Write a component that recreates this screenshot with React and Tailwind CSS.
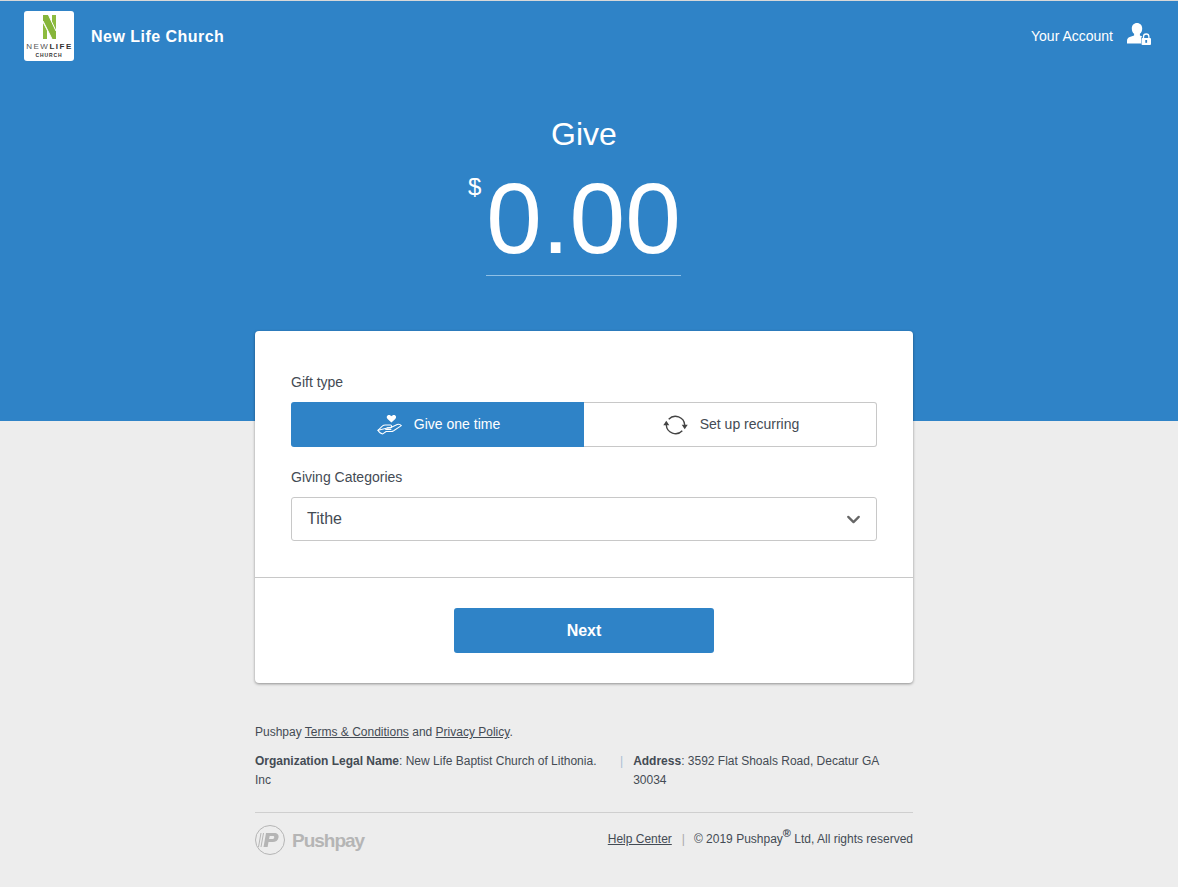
import { ChevronDown } from 'lucide-react'

const sans = { fontFamily: '"Liberation Sans", Arial, sans-serif' }

function ChurchLogo() {
  return (
    <div className="w-[50px] h-[50px] bg-white rounded-[3px] flex flex-col items-center pt-[4px] shrink-0">
      <svg width="13" height="24" viewBox="0 0 13 24">
        <path d="M0 8l4 7.500V24H0z" fill="#8dbb3f" />
        <path d="M9 0h4v16L9 8.500z" fill="#8dbb3f" />
        <path d="M0 0h5.500L13 16v8H9L0 6z" fill="#86b53a" />
        <path d="M0 6l9 18" stroke="#ffffff" strokeWidth="1" />
        <path d="M5.500 0L13 16" stroke="#ffffff" strokeWidth="1" />
      </svg>
      <div className="text-[8px] leading-[8px] mt-[4px] tracking-[1.5px] text-[#555] whitespace-nowrap pl-[1px]">
        NEW<span className="font-bold text-[#333]">LIFE</span>
      </div>
      <div className="text-[5px] leading-[5px] mt-[2px] font-bold tracking-[0.9px] text-[#333]">CHURCH</div>
    </div>
  )
}

function AccountIcon() {
  return (
    <svg width="24" height="22" viewBox="0 0 24 22" fill="white">
      <path d="M10 0c3.100 0 5.200 2.300 5.200 5.400 0 2.300-.9 4.300-2.300 5.400v1.700c.9.4 1.600.7 2.300 1-.8.600-1.200 1.500-1.200 2.600V20.500H0v-2.500c0-2.200 1-3.300 2.800-4 1.300-.5 2.900-1 4.300-1.500v-1.700C5.700 9.700 4.800 7.700 4.800 5.400 4.800 2.300 6.900 0 10 0z" />
      <path d="M15.500 15h7.500a1 1 0 0 1 1 1v5a1 1 0 0 1-1 1h-7.500a1 1 0 0 1-1-1v-5a1 1 0 0 1 1-1z" />
      <path d="M16.500 15v-1.300a2.700 2.700 0 0 1 5.400 0V15" fill="none" stroke="white" strokeWidth="1.300" />
      <rect x="18.300" y="17" width="1.800" height="2.800" fill="#2f83c7" />
    </svg>
  )
}

function HandHeartIcon() {
  return (
    <svg width="25" height="21" viewBox="0 0 26 21" fill="none" stroke="white" strokeWidth="1.100" strokeLinecap="round" strokeLinejoin="round">
      <path d="M15 8.500l-4-3.800C9.300 2.900 10.400.5 12.400.5c1.200 0 2 .6 2.600 1.500.6-.9 1.400-1.500 2.600-1.500 2 0 3.100 2.400 1.400 4.200z" fill="white" stroke="none" />
      <path d="M1 16.500l4.500-4.200c1-1 2-1.300 3.300-1.300h5.200c1.600 0 1.600 3 0 3h-3.500" />
      <path d="M15.500 13l5.500-2.500c1.800-.8 3.400.1 4.300 1.200l-8 5.300c-.8.500-1.600.8-2.600.8H9.500L6 20.300c-2-.2-4-1.800-5-3.800z" />
      <path d="M9 15.700h5.500" />
    </svg>
  )
}

function RecurringIcon() {
  return (
    <svg width="25" height="22" viewBox="0 0 25 22" fill="none" stroke="#444" strokeWidth="1.400">
      <path d="M5.700 5.200A9.300 9.300 0 0 1 21.700 11" />
      <path d="M19.300 16.800A9.300 9.300 0 0 1 3.300 11" />
      <path d="M18.700 10.700h6l-3 4.600z" fill="#444" stroke="none" />
      <path d="M.3 11.300h6l-3-4.600z" fill="#444" stroke="none" />
    </svg>
  )
}

function PushpayLogo() {
  return (
    <div className="flex items-center">
      <div className="w-[30px] h-[30px] rounded-full border border-[#b5b5b5] flex items-center justify-center">
        <svg width="22" height="14" viewBox="0 0 22 14" className="mr-[2px]">
          <path d="M2.500 0h1L1 14H0zM5 0h1L3.500 14h-1z" fill="#b5b5b5" />
          <path d="M8 0h8c3.500 0 5 1.800 4.500 4.500C20 7.500 17.800 9 14.500 9h-4l-.9 5H5.500zM11.700 3L11 6h3c1.200 0 2-.5 2.200-1.600C16.400 3.500 15.800 3 14.800 3z" fill="#b5b5b5" />
        </svg>
      </div>
      <span className="ml-[7px] text-[19px] font-bold tracking-[-1px] text-[#b5b5b5] leading-none">Pushpay</span>
    </div>
  )
}

export default function App() {
  return (
    <div className="min-h-[887px] bg-[#ededed] text-[#444b54]" style={sans}>
      {/* Blue header */}
      <div className="h-[421px] bg-[#2f83c7] border-t border-[#d8d8d8] text-white">
        <div className="flex items-center justify-between pl-[24px] pr-[27px] pt-[10px]">
          <div className="flex items-center">
            <ChurchLogo />
            <span className="ml-[17px] text-[16px] font-bold tracking-[0.47px] translate-y-[1px]">New Life Church</span>
          </div>
          <div className="flex items-center">
            <span className="text-[14px]">Your Account</span>
            <span className="ml-[14px] -mt-[4px]"><AccountIcon /></span>
          </div>
        </div>
        <div className="w-[1168px] flex flex-col items-center">
          <h1 className="mt-[54px] text-[32px] leading-[38px]">Give</h1>
          <div className="relative mt-[15px] mr-[1px] w-[195px] border-b border-[#8fc0e6] h-[108px] flex justify-center">
            <span className="absolute -left-[18px] top-[7px] text-[24px] leading-[24px]">$</span>
            <span className="text-[100px] leading-[100px] whitespace-nowrap">0.00</span>
          </div>
        </div>
      </div>

      {/* Card and footer */}
      <div className="w-[1168px] flex flex-col items-center">
        <div className="relative -mt-[90px] w-[658px] bg-white rounded-[4px] shadow-[0_1px_3px_rgba(0,0,0,0.4)]">
          <div className="px-[36px] pt-[43px] pb-[36px] border-b border-[#c8c8c8]">
            <div className="text-[14px] leading-[16px]">Gift type</div>
            <div className="mt-[12px] flex h-[45px] text-[14px]">
              <button className="w-[293px] pl-[2px] bg-[#2f83c7] text-white rounded-l-[3px] flex items-center justify-center gap-[12px]">
                <HandHeartIcon />
                Give one time
              </button>
              <button className="flex-1 pl-[2px] bg-white border border-l-0 border-[#c8c8c8] rounded-r-[3px] flex items-center justify-center gap-[12px]">
                <RecurringIcon />
                Set up recurring
              </button>
            </div>
            <div className="mt-[22px] text-[14px] leading-[16px]">Giving Categories</div>
            <div className="mt-[12px] h-[44px] border border-[#c8c8c8] rounded-[3px] flex items-center justify-between pl-[15px] pr-[12px]">
              <span className="text-[16px]">Tithe</span>
              <ChevronDown size={21} strokeWidth={2.6} color="#666" className="mt-[1px]" />
            </div>
          </div>
          <div className="flex justify-center pt-[30px] pb-[30px]">
            <button className="w-[260px] h-[45px] bg-[#2f83c7] text-white text-[16px] font-bold rounded-[3px]">Next</button>
          </div>
        </div>

        <div className="w-[658px] mt-[40px] text-[12px] leading-[19px]">
          <p>
            Pushpay <a className="underline">Terms &amp; Conditions</a> and <a className="underline">Privacy Policy</a>.
          </p>
          <div className="flex mt-[10px]">
            <p className="w-[354px]">
              <b>Organization Legal Name</b>: New Life Baptist Church of Lithonia. Inc
            </p>
            <span className="ml-[11px] text-[#a9bfd4]">|</span>
            <p className="ml-[10px] w-[256px]">
              <b>Address</b>: 3592 Flat Shoals Road, Decatur GA 30034
            </p>
          </div>
          <div className="mt-[22px] pt-[12px] border-t border-[#cfcfcf] flex items-center justify-between">
            <PushpayLogo />
            <div className="whitespace-nowrap -mt-[2px]">
              <a className="underline">Help Center</a>
              <span className="ml-[10px] mr-[9px] text-[#aaa]">|</span>
              © 2019 Pushpay<sup className="text-[11px] font-bold leading-none">®</sup> Ltd, All rights reserved
            </div>
          </div>
        </div>
      </div>
    </div>
  )
}
